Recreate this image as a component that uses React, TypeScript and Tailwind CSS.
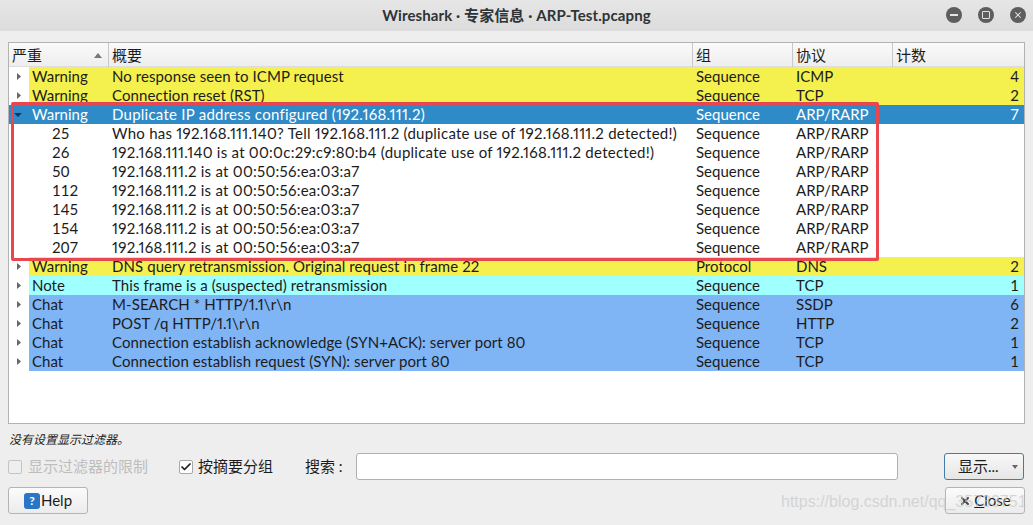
import { Check, X } from 'lucide-react';

const cols = 'grid grid-cols-[20px_80px_584px_100px_100px_1fr]';

type Row = { tone: string; sev?: string; num?: string; text: string; group: string; proto: string; count?: string };

const rows: Row[] = [
    { tone: 'bg-[#f4f04e]', sev: 'Warning', text: 'No response seen to ICMP request', group: 'Sequence', proto: 'ICMP', count: '4' },
    { tone: 'bg-[#f4f04e]', sev: 'Warning', text: 'Connection reset (RST)', group: 'Sequence', proto: 'TCP', count: '2' },
    { tone: 'open', sev: 'Warning', text: 'Duplicate IP address configured (192.168.111.2)', group: 'Sequence', proto: 'ARP/RARP', count: '7' },
    { tone: '', num: '25', text: 'Who has 192.168.111.140? Tell 192.168.111.2 (duplicate use of 192.168.111.2 detected!)', group: 'Sequence', proto: 'ARP/RARP' },
    { tone: '', num: '26', text: '192.168.111.140 is at 00:0c:29:c9:80:b4 (duplicate use of 192.168.111.2 detected!)', group: 'Sequence', proto: 'ARP/RARP' },
    { tone: '', num: '50', text: '192.168.111.2 is at 00:50:56:ea:03:a7', group: 'Sequence', proto: 'ARP/RARP' },
    { tone: '', num: '112', text: '192.168.111.2 is at 00:50:56:ea:03:a7', group: 'Sequence', proto: 'ARP/RARP' },
    { tone: '', num: '145', text: '192.168.111.2 is at 00:50:56:ea:03:a7', group: 'Sequence', proto: 'ARP/RARP' },
    { tone: '', num: '154', text: '192.168.111.2 is at 00:50:56:ea:03:a7', group: 'Sequence', proto: 'ARP/RARP' },
    { tone: '', num: '207', text: '192.168.111.2 is at 00:50:56:ea:03:a7', group: 'Sequence', proto: 'ARP/RARP' },
    { tone: 'bg-[#f4f04e]', sev: 'Warning', text: 'DNS query retransmission. Original request in frame 22', group: 'Protocol', proto: 'DNS', count: '2' },
    { tone: 'bg-[#a0ffff]', sev: 'Note', text: 'This frame is a (suspected) retransmission', group: 'Sequence', proto: 'TCP', count: '1' },
    { tone: 'bg-[#7fb4f5]', sev: 'Chat', text: 'M-SEARCH * HTTP/1.1\\r\\n', group: 'Sequence', proto: 'SSDP', count: '6' },
    { tone: 'bg-[#7fb4f5]', sev: 'Chat', text: 'POST /q HTTP/1.1\\r\\n', group: 'Sequence', proto: 'HTTP', count: '2' },
    { tone: 'bg-[#7fb4f5]', sev: 'Chat', text: 'Connection establish acknowledge (SYN+ACK): server port 80', group: 'Sequence', proto: 'TCP', count: '1' },
    { tone: 'bg-[#7fb4f5]', sev: 'Chat', text: 'Connection establish request (SYN): server port 80', group: 'Sequence', proto: 'TCP', count: '1' },
];

function Arrow({ open, light }: { open?: boolean; light?: boolean }) {
    return (
        <svg width="20" height="19" viewBox="0 0 20 19" className="block">
            {open
                ? <path d="M5 8h8l-4 4z" fill={light ? '#10395c' : '#555'} />
                : <path d="M8 6l4 3.5-4 3.5z" fill="#666" />}
        </svg>
    );
}

function TableRow({ row }: { row: Row }) {
    const open = row.tone === 'open';
    const child = !row.sev;
    // rows holding addresses run a little wider than the plain text ones
    const spacing = /\d{3}\./.test(row.text) ? 'tracking-[0.25px]' : 'tracking-[0.08px]';
    return (
        <div className={`${cols} h-[19px] leading-[19px] ${open ? 'bg-[#2f8bc7] text-white' : 'text-[#1c1c1c]'}`}>
            <div>{!child && <Arrow open={open} light={open} />}</div>
            <div className={`pl-[3px] ${open ? '' : row.tone}`}>
                {child ? <span className="pl-5">{row.num}</span> : row.sev}
            </div>
            <div className={`pl-[3px] whitespace-nowrap proportional-nums ${spacing} ${open ? '' : row.tone}`}>{row.text}</div>
            <div className={`pl-[3px] ${open ? '' : row.tone}`}>{row.group}</div>
            <div className={`pl-[3px] ${open ? '' : row.tone}`}>{row.proto}</div>
            <div className={`pr-[5px] text-right ${open ? '' : row.tone}`}>{row.count}</div>
        </div>
    );
}

function TitleButton({ children }: { children: React.ReactNode }) {
    return <div className="flex h-4 w-4 items-center justify-center rounded-full bg-[#5e5e5e] text-[#e4e4e4]">{children}</div>;
}

export default function App() {
    return (
        <div className="relative flex h-[525px] w-[1033px] flex-col overflow-hidden bg-[#eeeeee] text-[15px] text-[#1c1c1c] font-['Lato','Noto_Sans_CJK_SC',sans-serif]">
            <div className="relative flex h-[31px] shrink-0 items-center justify-center bg-gradient-to-b from-[#e6e6e6] to-[#dcdcdc] text-[15px] font-bold tracking-[0.1px] text-[#2e3436]">
                Wireshark · 专家信息 · ARP-Test.pcapng
                <div className="absolute right-[7px] top-[7px] flex gap-4">
                    <TitleButton><div className="h-[2px] w-2 bg-[#e4e4e4]" /></TitleButton>
                    <TitleButton><div className="h-2 w-2 rounded-[1px] border-[1.5px] border-[#e4e4e4]" /></TitleButton>
                    <TitleButton><X size={10} strokeWidth={2.5} /></TitleButton>
                </div>
            </div>

            <div className="mx-2 mt-[11px] h-[382px] shrink-0 border border-[#b2b2b2] bg-white">
                <div className={`${cols} h-6 items-center bg-gradient-to-b from-[#fafafa] to-[#eeeeee] leading-6 border-b border-[#dddddd]`}>
                    <div className="col-span-2 flex h-full items-center justify-between border-r border-[#c8c8c8] pl-[3px] pr-[6px]">
                        严重
                        <svg width="8" height="5" viewBox="0 0 8 5"><path d="M0 5l4-5 4 5z" fill="#777" /></svg>
                    </div>
                    <div className="h-full border-r border-[#c8c8c8] pl-[3px]">概要</div>
                    <div className="h-full border-r border-[#c8c8c8] pl-[3px]">组</div>
                    <div className="h-full border-r border-[#c8c8c8] pl-[3px]">协议</div>
                    <div className="h-full pl-[3px]">计数</div>
                </div>
                {rows.map((r, i) => <TableRow key={i} row={r} />)}
            </div>

            <div className="ml-[9px] mt-2 h-[15px] text-[12px] leading-[15px] italic text-[#222222]">没有设置显示过滤器。</div>

            <div className="mt-[6px] flex h-[27px] items-center pl-2 pr-[9px]">
                <div className="flex w-[171px] items-center gap-[6px] text-[#bdbdbd]">
                    <div className="h-[14px] w-[14px] rounded-[2px] border border-[#c4c4c4] bg-[#eeeeee]" />
                    显示过滤器的限制
                </div>
                <div className="flex w-[126px] items-center gap-[5px]">
                    <div className="flex h-[14px] w-[14px] items-center justify-center rounded-[2px] border border-[#a8a8a8] bg-white"><Check size={12} strokeWidth={3.5} /></div>
                    按摘要分组
                </div>
                <div className="w-[51px] whitespace-pre">搜索 :</div>
                <div className="h-[27px] w-[542px] rounded-[3px] border border-[#b0b0b0] bg-white" />
                <div className="ml-[46px] flex h-[27px] w-[80px] items-center rounded-[3px] border border-[#3f7ea6] bg-gradient-to-b from-[#f8f8f8] to-[#e6e6e6]">
                    <span className="flex-1 pl-[13px]">显示...</span>
                    <svg width="6" height="4" viewBox="0 0 6 4" className="mr-[5px]"><path d="M0 0h6l-3 4z" fill="#666" /></svg>
                </div>
            </div>

            <div className="mt-[7px] flex items-center justify-between pl-2 pr-[8px]">
                <div className="flex h-[27px] w-20 items-center justify-center gap-px rounded-[3px] border border-[#b4b4b4] bg-gradient-to-b from-[#fbfbfb] to-[#ececec]">
                    <div className="flex h-4 w-4 items-center justify-center rounded-[3px] bg-[#2a76c6] text-[12px] font-bold text-white">?</div>
                    Help
                </div>
                <div className="flex h-[27px] w-20 items-center justify-center gap-[3px] rounded-[3px] border border-[#b4b4b4] bg-gradient-to-b from-[#fbfbfb] to-[#ececec]">
                    <X size={12} strokeWidth={4} className="text-[#444444]" />
                    <span><span className="underline">C</span>lose</span>
                </div>
            </div>

            <div className="absolute left-[11px] top-[102px] h-[159px] w-[868px] rounded-[2px] border-[3px] border-[#e8474f]" />
            <div className="absolute left-[781px] top-[490px] whitespace-nowrap text-[16px] text-[#c8c8c8]/70 font-['Liberation_Sans',sans-serif]">https://blog.csdn.net/qq_35733751</div>
        </div>
    );
}
